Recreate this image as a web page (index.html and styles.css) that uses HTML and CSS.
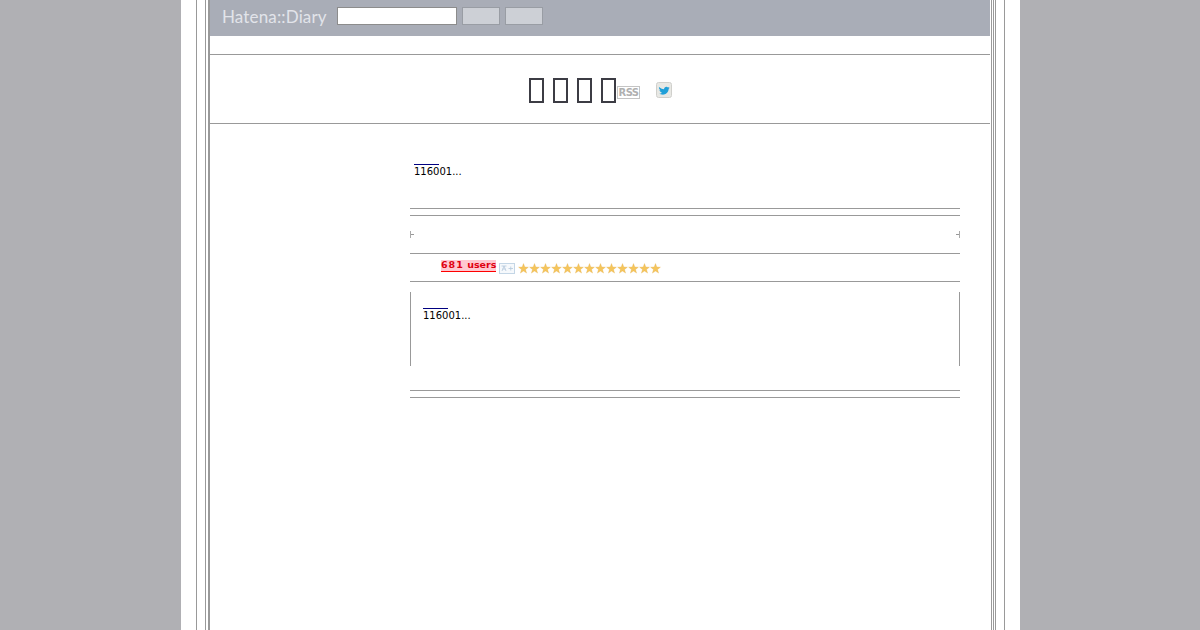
FILE: index.html
```html
<!DOCTYPE html>
<html>

<head>
    <title>Hatena::Diary</title>
    <meta charset="utf-8">
    <link rel="stylesheet" href="styles.css">
</head>

<body>
    <div class='sheet'>
        <div class='frame-outer'>
            <div class='frame-middle'>
                <div class='frame-inner'>
                    <div class='page'>
                        <div class='topbar'>
                            <span class='logo'>Hatena::Diary</span>
                            <input type='text' class='search'>
                            <button class='topbtn'></button>
                            <button class='topbtn topbtn-b'></button>
                        </div>
                        <div class='title-row'>
                            <div class='title-inner'>
                                <span class='tofu'></span><span class='tofu'></span><span class='tofu'></span><span class='tofu tofu-last'></span>
                                <span class='rss'>RSS</span>
                                <svg class='twitter' width='16' height='16' viewBox='0 0 16 16'>
                                    <rect x='0.5' y='0.5' width='15' height='15' rx='2' fill='#e8e8e4' stroke='#d0d0cc' />
                                    <path d='M3 5c2 1.500 3.500 2.200 5 2.300C8 5.200 10.500 4 12 5.500l1.500-.5-.9 1.400 1-.2-1 1.100C12.500 10.500 9.500 13 6 12.600c-1-.1-2-.5-2.600-1 1 0 2-.3 2.600-.9C4.500 10.300 3.500 9 3.500 8c.4.200.8.300 1.200.3C3.400 7.500 2.700 6.300 3 5z' fill='#1f9fd8' />
                                </svg>
                            </div>
                        </div>
                        <div class='main'>
                            <div class='column'>
                                <div class='entry-top'>
                                    <div class='entry-head'></div>
                                    <p class='snippet'>116001...</p>
                                </div>
                                <div class='double-rule'></div>
                                <div class='pager'>
                                    <span class='tick tick-l'></span>
                                    <span class='tick tick-r'></span>
                                </div>
                                <div class='meta'>
                                    <span class='users'><span class='users-count'>681</span> users</span>
                                    <svg class='addbm' width='16' height='11' viewBox='0 0 16 11'>
                                        <rect x='0.500' y='0.500' width='15' height='10' fill='#f6f9fc' stroke='#c4d6e6' />
                                        <path d='M2.500 3h5M5 3l-2 5M5 3l2 5M3.500 6h3M9.500 5.500h4.500M11.750 3.500v4' fill='none' stroke='#b4c8dc' stroke-width='0.800' />
                                    </svg>
                                    <svg class='stars' width='143' height='11' viewBox='0 0 143 11'>
                                        <defs>
                                            <polygon id='star' points='5.500,0.600 6.800,4 10.400,4.200 7.500,6.500 8.600,10.100 5.500,8.100 2.400,10.100 3.500,6.500 0.600,4.200 4.200,4' fill='#f5c55c' stroke='#e4ae48' stroke-width='0.300' />
                                        </defs>
                                        <use href='#star' x='0' />
                                        <use href='#star' x='11' />
                                        <use href='#star' x='22' />
                                        <use href='#star' x='33' />
                                        <use href='#star' x='44' />
                                        <use href='#star' x='55' />
                                        <use href='#star' x='66' />
                                        <use href='#star' x='77' />
                                        <use href='#star' x='88' />
                                        <use href='#star' x='99' />
                                        <use href='#star' x='110' />
                                        <use href='#star' x='121' />
                                        <use href='#star' x='132' />
                                    </svg>
                                </div>
                                <div class='entry-body'>
                                    <div class='entry-head'></div>
                                    <p class='snippet'>116001...</p>
                                </div>
                                <div class='double-rule rule-bottom'></div>
                            </div>
                        </div>
                    </div>
                </div>
            </div>
        </div>
    </div>
</body>

</html>
```

FILE: styles.css
```css
* {
    box-sizing: border-box;
}

html,
body {
    height: 100%;
}

body {
    margin: 0;
    background-color: #b0b0b4;
    font-family: "DejaVu Sans", sans-serif;
    overflow: hidden;
}

.sheet {
    width: 839px;
    height: 100%;
    margin-left: 181px;
    padding: 0 15px;
    background-color: #fff;
}

.frame-outer {
    height: 100%;
    padding: 0 8px;
    border-left: 1px solid #999;
    border-right: 1px solid #999;
}

.frame-middle {
    height: 100%;
    padding: 0 1px 0 2px;
    border-left: 1px solid #999;
    border-right: 1px solid #999;
}

.frame-inner {
    height: 100%;
    padding-right: 1px;
    border-left: 1px solid #999;
    border-right: 1px solid #999;
}

.page {
    height: 100%;
    padding-right: 1px;
    border-left: 1px solid #999;
    border-right: 1px solid #999;
}

.topbar {
    display: flex;
    align-items: center;
    height: 36px;
    padding: 0 0 4px 12px;
    background-color: #a9adb7;
}

.logo {
    width: 115px;
    font-family: Lato, sans-serif;
    font-size: 17px;
    letter-spacing: 0.150px;
    color: #e2e4ea;
}

.search {
    width: 120px;
    height: 18px;
    margin: 0 5px 0 0;
    padding: 0;
    border: 1px solid #8c8c8c;
    background-color: #fff;
}

.topbtn {
    width: 38px;
    height: 18px;
    margin: 0 5px 0 0;
    padding: 0;
    border: 1px solid #999da4;
    background-color: #cdd0d6;
}

.title-row {
    height: 70px;
    margin-top: 18px;
    padding: 23px 0 0 319px;
    border-top: 1px solid #999;
    border-bottom: 1px solid #999;
}

.title-inner {
    display: flex;
    align-items: flex-start;
}

.tofu {
    flex: none;
    width: 15px;
    height: 25px;
    margin-right: 9px;
    border: 2px solid #3c3c44;
}

.tofu-last {
    margin-right: 0;
}

.rss {
    flex: none;
    width: 23px;
    height: 13px;
    margin: 8px 0 0 1px;
    border: 1px solid #c4c4c4;
    font-size: 10px;
    font-weight: bold;
    line-height: 11px;
    text-align: center;
    letter-spacing: -0.600px;
    color: #b0b0b0;
}

.twitter {
    flex: none;
    margin: 4px 0 0 16px;
}

.main {
    padding: 40px 0 0 200px;
}

.column {
    width: 550px;
}

.entry-top {
    height: 44px;
    padding-left: 4px;
}

.entry-head {
    width: 25px;
    height: 1px;
    background-color: #000080;
}

.snippet {
    margin: 0;
    font-size: 10px;
    line-height: 13px;
    color: #000;
}

.double-rule {
    height: 8px;
    border-top: 1px solid #999;
    border-bottom: 1px solid #999;
}

.pager {
    display: flex;
    justify-content: space-between;
    align-items: center;
    height: 38px;
    border-bottom: 1px solid #999;
}

.tick {
    width: 4px;
    height: 7px;
    background: linear-gradient(#999, #999) center / 100% 1px no-repeat;
}

.tick-l {
    border-left: 1px solid #aaa;
}

.tick-r {
    border-right: 1px solid #aaa;
}

.meta {
    display: flex;
    align-items: center;
    height: 28px;
    padding-left: 31px;
    border-bottom: 1px solid #999;
}

.users {
    flex: none;
    width: 55px;
    margin-top: -3px;
    padding-bottom: 1px;
    background-color: #ffc8d0;
    border-bottom: 1px solid #f00;
    font-size: 9.500px;
    font-weight: bold;
    line-height: 10px;
    text-align: center;
    white-space: nowrap;
    color: #e00010;
}

.users-count {
    letter-spacing: 1px;
}

.addbm {
    flex: none;
    margin: 2px 3px 0 3px;
}

.stars {
    flex: none;
    margin-top: 2px;
}

.entry-body {
    height: 74px;
    margin-top: 10px;
    padding: 16px 0 0 12px;
    border-left: 1px solid #999;
    border-right: 1px solid #999;
}

.rule-bottom {
    margin-top: 24px;
}
```
